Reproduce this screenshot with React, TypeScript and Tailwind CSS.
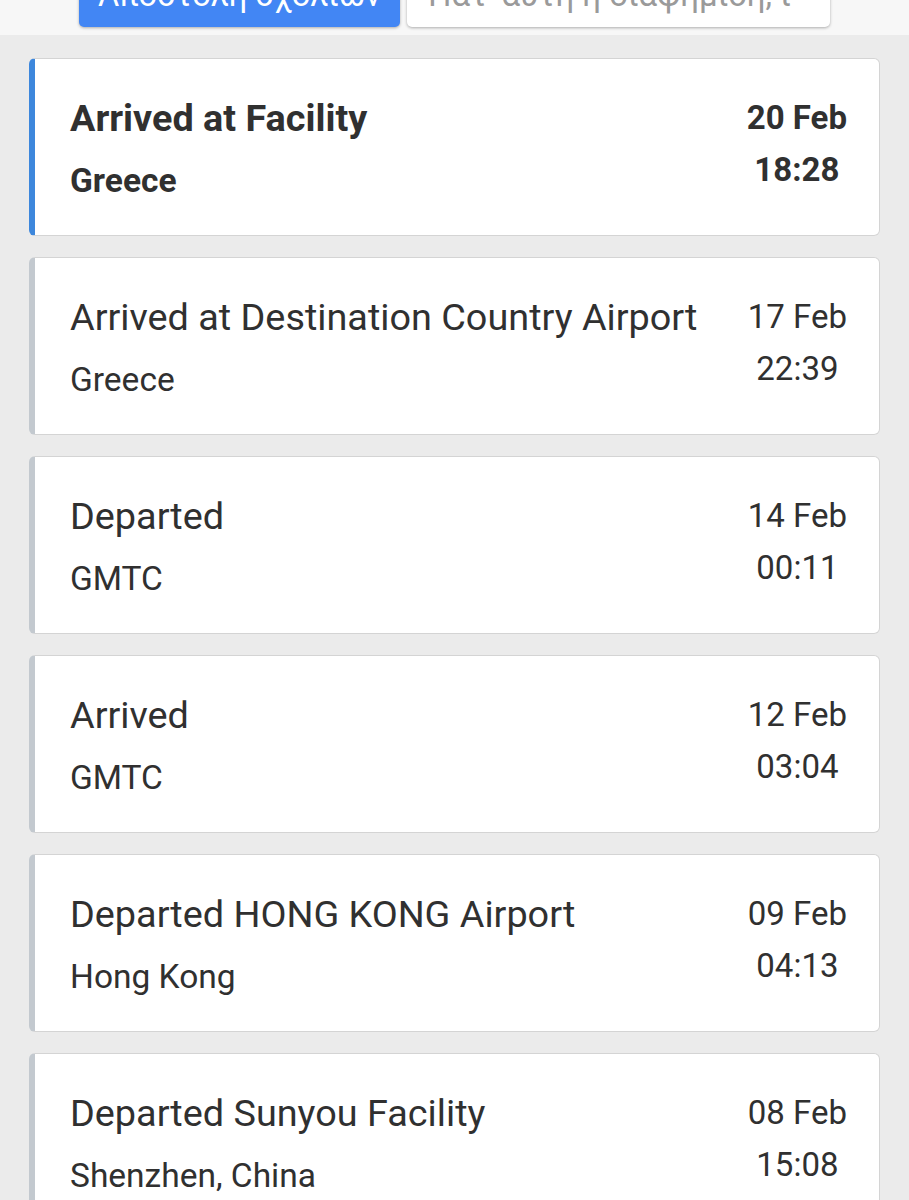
import React from "react";

type TrackEvent = {
    title: string;
    place: string;
    date: string;
    time: string;
};

const events: TrackEvent[] = [
    { title: "Arrived at Facility", place: "Greece", date: "20 Feb", time: "18:28" },
    { title: "Arrived at Destination Country Airport", place: "Greece", date: "17 Feb", time: "22:39" },
    { title: "Departed", place: "GMTC", date: "14 Feb", time: "00:11" },
    { title: "Arrived", place: "GMTC", date: "12 Feb", time: "03:04" },
    { title: "Departed HONG KONG Airport", place: "Hong Kong", date: "09 Feb", time: "04:13" },
    { title: "Departed Sunyou Facility", place: "Shenzhen, China", date: "08 Feb", time: "15:08" },
    { title: "Received by Line-haul", place: "Shenzhen, China", date: "07 Feb", time: "20:41" },
];

function EventCard({ ev, latest }: { ev: TrackEvent; latest: boolean }) {
    return (
        <div
            className={`flex bg-white rounded-md border border-[#d4d4d4] border-l-[6px] h-[178px] ${
                latest ? "border-l-[#3d87dc]" : "border-l-[#c3c9cf]"
            }`}
        >
            <div className={`flex-1 pl-[35px] pt-[35px] text-[#303030] whitespace-nowrap ${latest ? "font-bold" : ""}`}>
                <div className="text-[37.8px] leading-[48px]">{ev.title}</div>
                <div className="text-[33.5px] leading-[48px] mt-[15px]">{ev.place}</div>
            </div>
            <div
                className={`pt-[33px] pr-[32px] text-center text-[33px] leading-[52px] text-[#303030] ${
                    latest ? "font-bold" : ""
                }`}
            >
                <div>{ev.date}</div>
                <div>{ev.time}</div>
            </div>
        </div>
    );
}

export default function App() {
    return (
        <div className="min-h-[1200px] bg-[#ebebeb] font-['Roboto',sans-serif]">
            <div className="h-[35px] bg-[#f7f7f7] overflow-hidden">
                <div className="flex gap-[7px] pl-[79px] -mt-[37px]">
                    <div className="w-[321px] h-[64px] rounded-[5px] bg-[#4286f4] text-white text-[32.5px] leading-[64px] text-center whitespace-nowrap shadow-[0_1px_3px_rgba(0,0,0,0.3)]">
                        Αποστολή σχολίων
                    </div>
                    <div className="w-[423px] h-[64px] rounded-[5px] bg-white text-[#9a9a9a] text-[33px] leading-[64px] pl-[21px] whitespace-nowrap overflow-hidden shadow-[0_1px_3px_rgba(0,0,0,0.3)]">
                        Πατ' αυτή η διαφήμιση, ι-
                    </div>
                </div>
            </div>
            <div className="flex flex-col gap-[21px] px-[29px] pt-[23px]">
                {events.map((ev, i) => (
                    <EventCard key={i} ev={ev} latest={i === 0} />
                ))}
            </div>
        </div>
    );
}
